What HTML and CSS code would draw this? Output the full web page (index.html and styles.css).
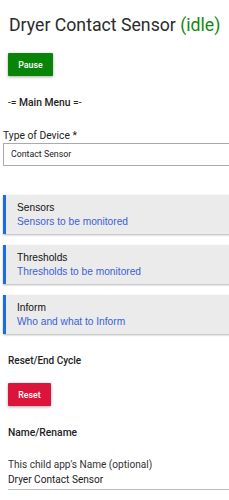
FILE: index.html
```html
<!DOCTYPE html>
<html>
<head>
<meta charset="utf-8">
<link rel="stylesheet" href="styles.css">
</head>
<body>
<div class="page">
  <h1 class="title">Dryer Contact Sensor <span class="status">(idle)</span></h1>
  <button class="btn btn-pause">Pause</button>
  <div class="menu-head">-= <b>Main Menu</b> =-</div>
  <div class="field">
    <div class="field-label">Type of Device *</div>
    <div class="select">Contact Sensor</div>
  </div>
  <div class="cards">
    <div class="card">
      <div class="card-title">Sensors</div>
      <div class="card-sub">Sensors to be monitored</div>
    </div>
    <div class="card">
      <div class="card-title">Thresholds</div>
      <div class="card-sub">Thresholds to be monitored</div>
    </div>
    <div class="card">
      <div class="card-title">Inform</div>
      <div class="card-sub">Who and what to Inform</div>
    </div>
  </div>
  <div class="section">Reset/End Cycle</div>
  <button class="btn btn-reset">Reset</button>
  <div class="section section-name">Name/Rename</div>
  <div class="text-field">
    <div class="tf-label">This child app's Name (optional)</div>
    <div class="tf-value">Dryer Contact Sensor</div>
  </div>
</div>
</body>
</html>
```
FILE: styles.css
```css
html, body {
  margin: 0;
  padding: 0;
  overflow: hidden;
  background: #fff;
}
.page {
  width: 270px;
  font-family: Roboto, "Liberation Sans", sans-serif;
  color: #222;
  display: flex;
  flex-direction: column;
  align-items: flex-start;
}
.title {
  margin: 14px 0 0 9px;
  font-size: 17.7px;
  line-height: 22px;
  font-weight: 400;
  color: #2b2b2b;
}
.status {
  color: #108a10;
}
.btn {
  border: none;
  color: #fff;
  font-family: Roboto, sans-serif;
  font-size: 8.8px;
  font-weight: 500;
  height: 23px;
  padding: 0;
  margin-left: 8px;
  box-shadow: 0 1px 3px rgba(0,0,0,0.35);
  border-radius: 1px;
}
.btn-pause {
  background: #088408;
  width: 45px;
  margin-top: 17px;
}
.menu-head {
  margin: 20px 0 0 8px;
  font-size: 10.3px;
  line-height: 14px;
  color: #222;
}
.menu-head b {
  font-weight: 500;
}
.field {
  margin: 20px 0 0 3px;
  width: 260px;
}
.field-label {
  font-size: 10.3px;
  line-height: 12px;
  color: #222;
}
.select {
  margin-top: 1px;
  height: 23px;
  box-sizing: border-box;
  border: 1px solid #aaa;
  font-size: 8.8px;
  line-height: 21px;
  padding-left: 7px;
  color: #222;
}
.cards {
  margin: 29px 0 0 3px;
  width: 260px;
  display: flex;
  flex-direction: column;
  gap: 11px;
}
.card {
  background: #ebebeb;
  border-left: 3px solid #1a6ee0;
  height: 39px;
  padding-left: 11px;
  box-shadow: 0 1px 2px rgba(0,0,0,0.3);
  font-family: "Liberation Sans", Arial, sans-serif;
  font-size: 10.2px;
  box-sizing: border-box;
  padding-top: 6px;
}
.card-title {
  line-height: 14px;
  color: #111;
}
.card-sub {
  line-height: 14px;
  color: #3a5fd6;
}
.section {
  margin: 20px 0 0 8px;
  font-size: 10px;
  line-height: 14px;
  font-weight: 500;
  color: #222;
}
.section-name {
  font-size: 10.3px;
}
.btn-reset {
  background: #dc143c;
  width: 43px;
  margin-top: 15px;
}
.text-field {
  margin: 17px 0 0 8px;
  width: 260px;
}
.tf-label {
  font-size: 10.1px;
  line-height: 15px;
  color: #333;
}
.tf-value {
  font-size: 10.1px;
  line-height: 15px;
  color: #222;
  border-bottom: 1px solid #bbb;
  padding-bottom: 2px;
}
```
